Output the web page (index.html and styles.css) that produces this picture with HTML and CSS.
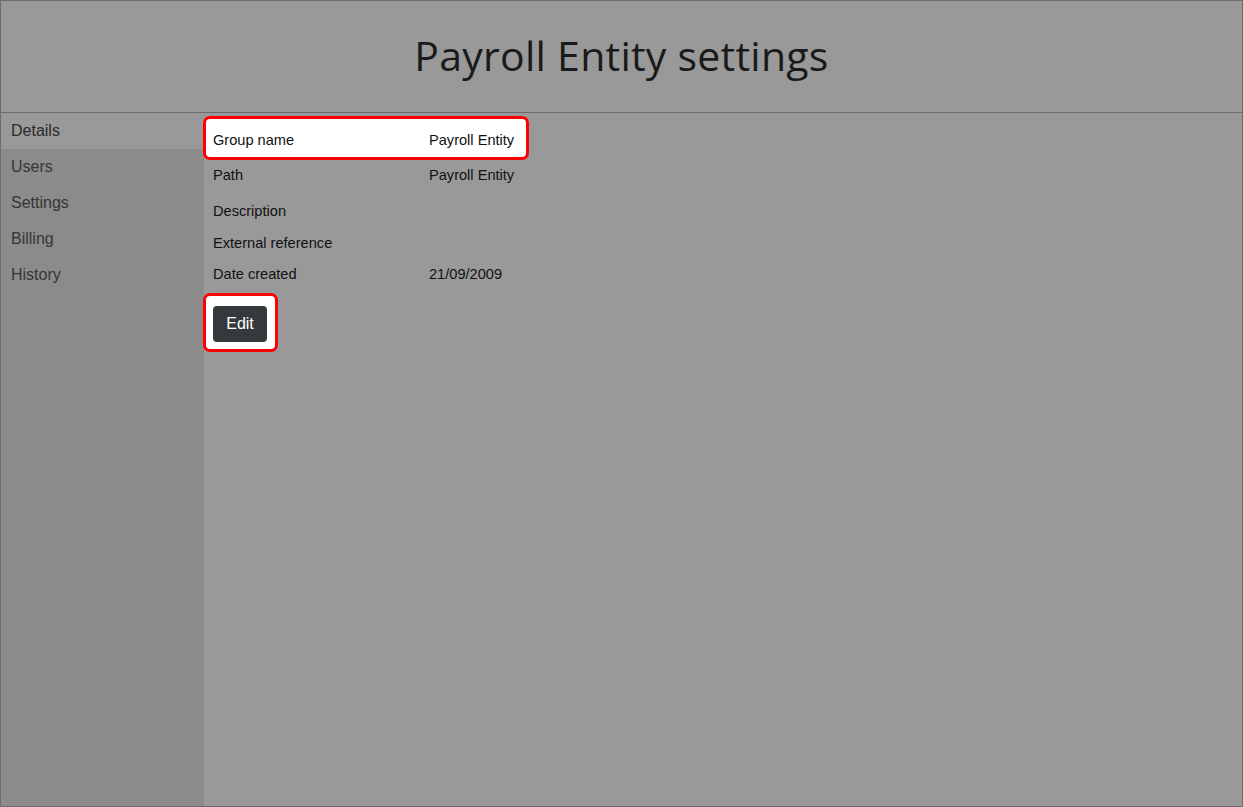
FILE: index.html
```html
<!DOCTYPE html>
<html lang="en">
<head>
    <meta charset="UTF-8">
    <meta name="viewport" content="width=device-width, initial-scale=1.0">
    <title>Payroll Entity settings</title>
    <link rel="stylesheet" href="styles.css">
</head>
<body>
    <div class="frame">
        <header class="page-header">
            <h1 class="page-title">Payroll Entity settings</h1>
        </header>

        <div class="layout">
            <nav class="side-nav">
                <a class="nav-item active" href="#">Details</a>
                <a class="nav-item" href="#">Users</a>
                <a class="nav-item" href="#">Settings</a>
                <a class="nav-item" href="#">Billing</a>
                <a class="nav-item" href="#">History</a>
            </nav>

            <main class="content">
                <div class="detail-row highlight">
                    <span class="detail-label">Group name</span>
                    <span class="detail-value">Payroll Entity</span>
                </div>
                <div class="detail-row">
                    <span class="detail-label">Path</span>
                    <span class="detail-value">Payroll Entity</span>
                </div>
                <div class="detail-row">
                    <span class="detail-label">Description</span>
                    <span class="detail-value"></span>
                </div>
                <div class="detail-row short">
                    <span class="detail-label">External reference</span>
                    <span class="detail-value"></span>
                </div>
                <div class="detail-row date">
                    <span class="detail-label">Date created</span>
                    <span class="detail-value">21/09/2009</span>
                </div>

                <div class="actions highlight">
                    <button class="edit-button">Edit</button>
                </div>
            </main>
        </div>
    </div>
</body>
</html>
```

FILE: styles.css
```css
* {
    margin: 0;
    padding: 0;
    box-sizing: border-box;
}

body {
    font-family: "Liberation Sans", Arial, sans-serif;
    background-color: #999999;
}

.frame {
    height: 807px;
    border: 1px solid #6c6c6c;
    display: flex;
    flex-direction: column;
    background-color: #999999;
}

.page-header {
    height: 112px;
    border-bottom: 1px solid #6c6c6c;
    display: flex;
    align-items: center;
    justify-content: center;
}

.page-title {
    font-family: "Open Sans", sans-serif;
    font-weight: 400;
    font-size: 41px;
    letter-spacing: 0.25px;
    color: #1a1a1a;
    margin-bottom: 4px;
}

.layout {
    flex: 1;
    display: flex;
}

.side-nav {
    width: 203px;
    background-color: #8a8b8a;
    display: flex;
    flex-direction: column;
}

.nav-item {
    height: 36px;
    line-height: 35px;
    padding-left: 10px;
    font-size: 16px;
    color: #363636;
    text-decoration: none;
}

.nav-item.active {
    background-color: #999999;
    color: #2a2a2a;
}

.content {
    flex: 1;
    padding-top: 6px;
}

.detail-row {
    display: flex;
    height: 36px;
    align-items: center;
    padding-left: 9px;
    font-size: 14.6px;
    color: #111111;
}

.detail-row.short {
    height: 28px;
}

.detail-row.date {
    height: 33px;
}

.detail-label {
    width: 216px;
}

.highlight {
    background-color: #ffffff;
    border-radius: 4px;
    box-shadow: 0 0 0 3px #ff0000;
}

.detail-row.highlight {
    width: 320px;
    height: 38px;
    margin-left: 2px;
    padding-left: 7px;
    padding-top: 4px;
}

.actions {
    display: inline-block;
    margin-top: 6px;
    margin-left: 2px;
    padding: 10px 8px 7px 7px;
}

.edit-button {
    display: block;
    width: 54px;
    height: 36px;
    border: none;
    border-radius: 4px;
    background-color: #343a3c;
    color: #ffffff;
    font-family: "Liberation Sans", Arial, sans-serif;
    font-size: 16px;
    cursor: pointer;
}
```
